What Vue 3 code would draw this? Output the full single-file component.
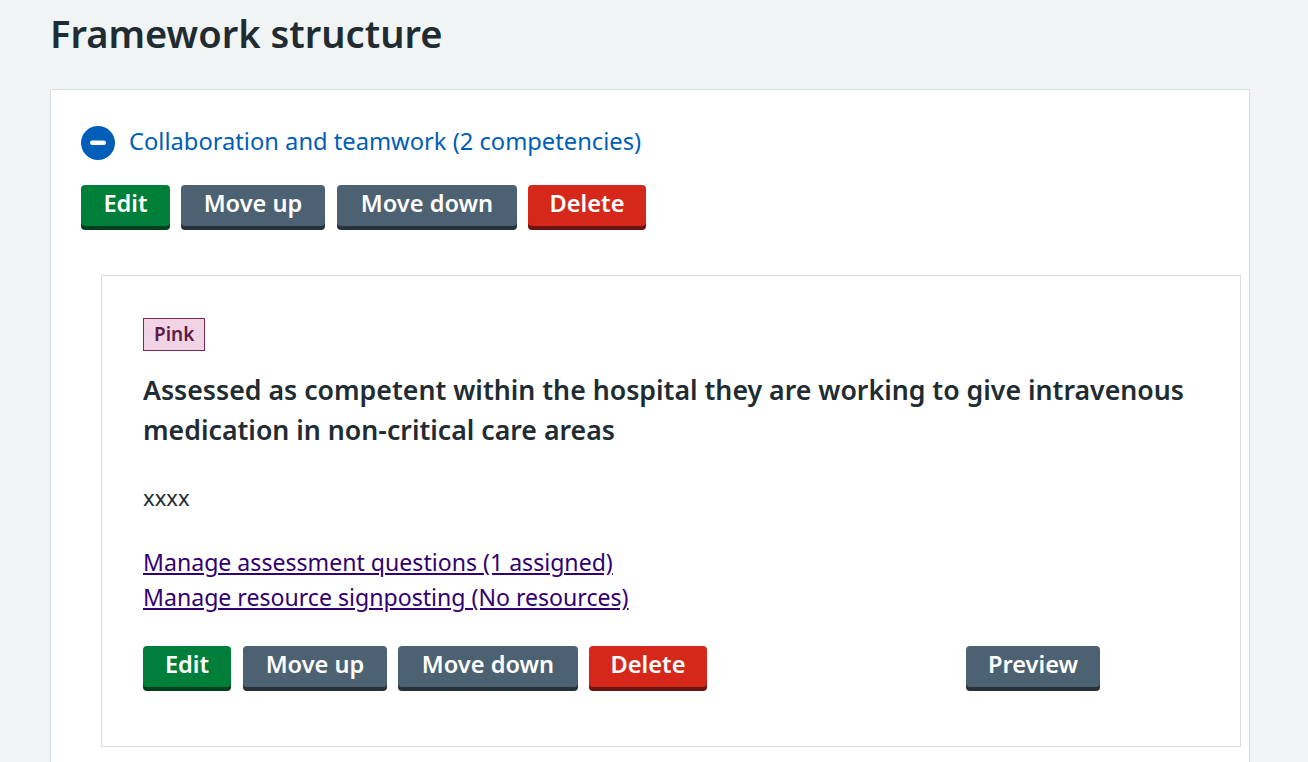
<script setup>
const groupButtons = [
  { label: 'Edit', kind: 'green w-edit' },
  { label: 'Move up', kind: 'slate w-up' },
  { label: 'Move down', kind: 'slate w-down' },
  { label: 'Delete', kind: 'red w-delete' }
]
</script>

<template>
  <main class="page">
    <h1 class="title">Framework structure</h1>
    <section class="card">
      <div class="group-head">
        <svg class="toggle" viewBox="0 0 34 34" width="34" height="34" aria-hidden="true">
          <circle cx="17" cy="17" r="17" fill="#005eb8" />
          <rect x="9" y="14.5" width="16" height="4.5" rx="2.25" fill="#fff" />
        </svg>
        <span class="group-name">Collaboration and teamwork (2 competencies)</span>
      </div>
      <div class="btn-row">
        <button v-for="b in groupButtons" :key="b.label" class="btn" :class="b.kind">{{ b.label }}</button>
      </div>
      <article class="inner">
        <span class="tag">Pink</span>
        <h2 class="comp-title">Assessed as competent within the hospital they are working to give intravenous medication in non-critical care areas</h2>
        <p class="desc">xxxx</p>
        <div class="links">
          <a href="#" class="link">Manage assessment questions (1 assigned)</a>
          <a href="#" class="link">Manage resource signposting (No resources)</a>
        </div>
        <div class="btn-row">
          <button v-for="b in groupButtons" :key="b.label" class="btn" :class="b.kind">{{ b.label }}</button>
          <button class="btn slate preview">Preview</button>
        </div>
      </article>
    </section>
  </main>
</template>

<style>
html, body { margin: 0; background: #f0f4f5; overflow: hidden; }
</style>

<style scoped>
.page {
  height: 762px;
  overflow: hidden;
  padding: 0 58px 0 50px;
  font-family: "Noto Sans", "Open Sans", sans-serif;
  color: #212b32;
  box-sizing: border-box;
}
.title {
  margin: 0;
  padding-top: 9px;
  height: 89px;
  box-sizing: border-box;
  font-size: 38.1px;
  line-height: 48px;
  font-weight: 600;
}
.card {
  width: 1200px;
  height: 700px;
  box-sizing: border-box;
  background: #fff;
  border: 1px solid #d8dde0;
  padding: 36px 8px 0 30px;
}
.group-head {
  display: flex;
  align-items: center;
  gap: 14px;
  height: 34px;
  margin-bottom: 25px;
}
.toggle { flex: none; }
.group-name {
  color: #005eb8;
  font-size: 23.7px;
  line-height: 32px;
  padding-bottom: 4px;
}
.btn-row { display: flex; gap: 11px; }
.btn {
  height: 41px;
  border: 0;
  border-radius: 4px;
  padding: 0 0 5px;
  color: #fff;
  font-family: inherit;
  font-size: 23.6px;
  line-height: 30px;
  font-weight: 600;
  white-space: nowrap;
}
.w-edit { width: 89px; }
.w-up { width: 144px; margin-right: 1px; }
.w-down { width: 180px; }
.w-delete { width: 118px; }
.inner .w-edit { width: 88px; margin-right: 1px; }
.inner .w-up { margin-right: 0; }
.green { background: #007f3b; box-shadow: 0 4px 0 #00401e; }
.slate { background: #4c6272; box-shadow: 0 4px 0 #263139; }
.red { background: #d5281b; box-shadow: 0 4px 0 #6b140e; }
.preview { width: 134px; margin-left: 248px; }
.inner {
  margin: 49px 0 0 20px;
  height: 472px;
  box-sizing: border-box;
  border: 1px solid #d8dde0;
  padding: 42px 41px 0;
}
.tag {
  display: inline-block;
  box-sizing: border-box;
  height: 33px;
  padding: 0 10px;
  border: 1px solid #7c2855;
  background: #f0d3e4;
  color: #5c1a3f;
  font-size: 19px;
  line-height: 31px;
  font-weight: 600;
  vertical-align: top;
}
.comp-title {
  margin: 19px 0 0;
  font-size: 26.7px;
  line-height: 40px;
  font-weight: 600;
}
.desc {
  margin: 31px 0 0;
  font-size: 22px;
  line-height: 32px;
}
.links { margin-top: 32px; display: flex; flex-direction: column; align-items: flex-start; }
.link {
  color: #330072;
  font-size: 23.1px;
  line-height: 35px;
  text-decoration: underline;
}
.links + .btn-row { margin-top: 31px; }
</style>
